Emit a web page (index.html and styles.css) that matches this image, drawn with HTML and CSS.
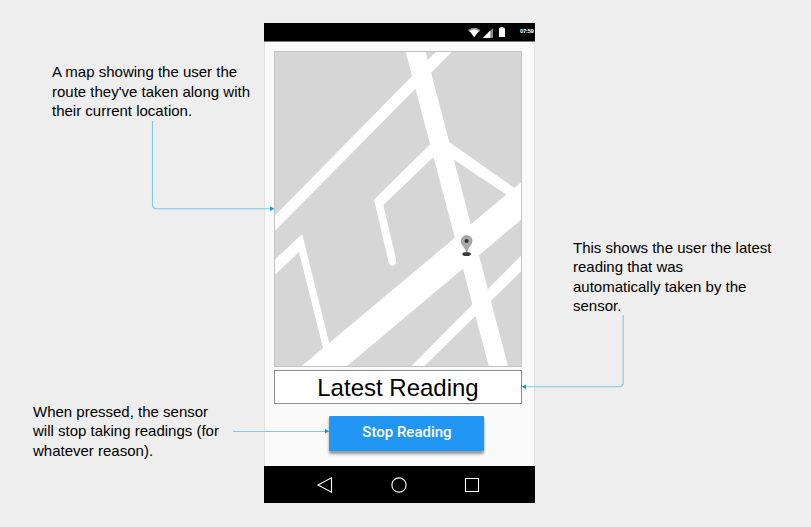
FILE: index.html
```html
<!DOCTYPE html>
<html lang="en">
<head>
<meta charset="utf-8">
<title>Reading screen</title>
<link rel="stylesheet" href="styles.css">
</head>
<body>
<main class="board">
  <aside class="notes notes-left">
    <p class="note note-map">A map showing the user the<br>route they've taken along with<br>their current location.</p>
    <p class="note note-stop">When pressed, the sensor<br>will stop taking readings (for<br>whatever reason).</p>
  </aside>

  <section class="phone">
    <header class="status">
      <svg class="status-icons" viewBox="468 27 38 11" width="38" height="11">
        <path fill="#888" d="M468 30Q474.200 25.400 480.400 30L479 32H469.400Z"/>
        <path fill="#fff" d="M469.600 31Q474.200 27.600 478.900 31L474.200 37.300Z"/>
        <path fill="#888" d="M493 28V38H483Z"/>
        <path fill="#fff" d="M490.300 30.600V38H483Z"/>
        <path fill="#fff" d="M500.200 27.300h3.400v1h1.400v8.700h-6v-8.700h1.200z"/>
      </svg>
      <span class="time">07:59</span>
    </header>

    <div class="content">
      <div class="map">
        <svg viewBox="275 52 246 314" width="246" height="314">
          <g fill="#fff">
            <path d="M274 216.500L436.700 51H452.700L274 231.800Z"/>
            <path d="M405.500 51H425.400L508.200 367H489Z"/>
            <path d="M431 143.500L374 199.500L388.700 262.500Q390 266 392.500 266Q396.600 265 396 259.500L383.400 205L434 156.500Z"/>
            <path d="M448 141.300L514.500 188L506.500 194.800L452 158.500Z"/>
            <path d="M522 181.500L300.500 367H346L522 219Z"/>
            <path d="M522 254.700L410.500 367H423.300L522 270.600Z"/>
            <path d="M274 260.500L302.200 234L329.500 344L323.500 350L299 252L274 275.800Z"/>
          </g>
          <ellipse cx="466.600" cy="254" rx="4.300" ry="2" fill="#3c3c3c"/>
          <path d="M466.600 252.500C466.300 247.500 461.200 245.500 461.200 241A5.400 5.400 0 0 1 472 241C472 245.500 466.900 247.500 466.600 252.500Z" fill="#aaa" stroke="#858585" stroke-width=".7"/>
          <circle cx="466.600" cy="241" r="2.100" fill="#333"/>
        </svg>
      </div>
      <div class="reading">Latest Reading</div>
      <button class="stop" type="button">Stop Reading</button>
    </div>

    <nav class="navbar">
      <svg viewBox="0 0 16 16" width="16" height="16"><path d="M1 8L14.500 .8V15.200Z"/></svg>
      <svg viewBox="0 0 16 16" width="16" height="16"><circle cx="8" cy="8" r="7.100"/></svg>
      <svg viewBox="0 0 16 16" width="16" height="16"><path d="M1.500 1.500H14.500V14.500H1.500Z"/></svg>
    </nav>
  </section>

  <aside class="notes notes-right">
    <p class="note">This shows the user the latest<br>reading that was<br>automatically taken by the<br>sensor.</p>
  </aside>

  <svg class="connectors" viewBox="0 0 811 527" width="811" height="527">
    <path class="wire" d="M152.500 121V204.500Q152.500 208.700 156.500 208.700H270"/>
    <path class="wire" d="M623.200 315V382.500Q623.200 386.700 619.200 386.700H526"/>
    <path class="wire" d="M233 431.500H325"/>
    <path class="tip" d="M270 206.500L274.500 208.700L270 210.900Z"/>
    <path class="tip" d="M526 384.500L521.500 386.700L526 388.900Z"/>
    <path class="tip" d="M325 429L329.300 431.200L325 433.400Z"/>
  </svg>
</main>
</body>
</html>
```
FILE: styles.css
```css
* {
  box-sizing: border-box;
}

body {
  margin: 0;
  background: #eee;
  font-family: "Liberation Sans", Arial, sans-serif;
  color: #000;
}

.board {
  position: relative;
  display: grid;
  grid-template-columns: 264px 271px 1fr;
  width: 811px;
  height: 527px;
  overflow: hidden;
}

.notes {
  display: flex;
  flex-direction: column;
}

.notes-left {
  padding-top: 62px;
}

.notes-right {
  padding: 237.6px 0 0 38px;
}

.note {
  margin: 0;
  font-size: 15px;
  line-height: 19.5px;
  white-space: nowrap;
}

.note-map {
  padding-left: 52px;
}

.note-stop {
  margin-top: 281.4px;
  padding-left: 33px;
}

.phone {
  display: flex;
  flex-direction: column;
  height: 480px;
  margin-top: 23px;
}

.status {
  display: flex;
  align-items: center;
  height: 19px;
  padding: 1px 0 0 204px;
  background: #000;
  border-bottom: 1px solid #777;
}

.time {
  margin: -3px 0 0 14px;
  color: #fff;
  font-size: 6px;
  font-weight: bold;
  letter-spacing: -.4px;
  line-height: 8px;
}

.content {
  display: flex;
  flex: 1;
  flex-direction: column;
  align-items: center;
  padding: 9px 12px 0 9px;
  background: #fafafa;
  border: solid #e2e2e2;
  border-width: 0 1px;
}

.map {
  width: 248px;
  height: 316px;
  background: #d6d6d6;
  border: 1px solid #c3c3c3;
}

.map svg {
  display: block;
}

.reading {
  width: 248px;
  height: 34px;
  margin-top: 3px;
  background: #fff;
  border: 1px solid #8a8a8a;
  font-size: 24px;
  line-height: 34px;
  text-align: center;
}

.stop {
  width: 155px;
  height: 35px;
  margin: 12px 0 0 16px;
  padding: 0 0 2px 2px;
  background: #2196f3;
  border: 0;
  border-radius: 1px;
  box-shadow: 0 3px 3px rgba(0, 0, 0, .4);
  color: #fff;
  font: 500 15px/33px Roboto, sans-serif;
}

.navbar {
  display: flex;
  align-items: center;
  justify-content: space-between;
  height: 37px;
  padding: 0 55px 0 53px;
  background: #000;
}

.navbar svg {
  fill: none;
  stroke: #fff;
  stroke-width: 1.1;
}

.connectors {
  position: absolute;
  inset: 0;
  pointer-events: none;
}

.wire {
  fill: none;
  stroke: #7accea;
  stroke-width: 1.1;
}

.tip {
  fill: #039fdc;
}
```
